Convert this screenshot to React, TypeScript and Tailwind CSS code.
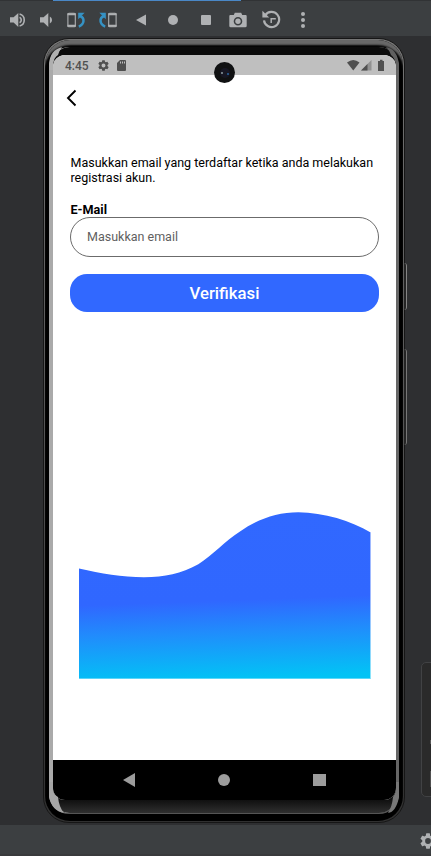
import React from "react";

function SoundIcon({ loud }: { loud?: boolean }) {
  return (
    <svg width="18" height="16" viewBox="0 0 18 16" fill="#afb1b3">
      <path d="M1 5.2h3.6L9.3 1v14L4.6 10.6H1z" />
      {loud ? (
        <g fill="none" stroke="#afb1b3" strokeWidth="1.6">
          <path d="M10.6 5.2a3.2 3.2 0 0 1 0 5.6" />
          <path d="M10.6 2a6.2 6.2 0 0 1 0 12" />
        </g>
      ) : (
        <path d="M10.8 4.4a4 4 0 0 1 0 7.2z" />
      )}
    </svg>
  );
}

function RotateIcon({ flip }: { flip?: boolean }) {
  return (
    <svg width="20" height="16" viewBox="0 0 20 16" className={flip ? "-ml-[2px] -scale-x-100" : ""}>
      <rect x="0.9" y="1.2" width="7.4" height="13.6" rx="1" fill="none" stroke="#afb1b3" strokeWidth="1.1" />
      <path d="M0.4 1.2h8.4v2H0.4zM0.4 12.8h8.4v2H0.4z" fill="#afb1b3" />
      <path d="M13 4c5 2 4.600 8.400-1.200 10.600" fill="none" stroke="#3592c4" strokeWidth="2.500" />
      <path d="M11.200 .8h6.400l-6.400 6.400z" fill="#3592c4" />
    </svg>
  );
}

function GearIcon({ size, color }: { size: number; color: string }) {
  return (
    <svg width={size} height={size} viewBox="2 2 20 20" fill={color} className="shrink-0">
      <path d="M19.14 12.94c.04-.3.06-.61.06-.94 0-.32-.02-.64-.07-.94l2.03-1.58a.49.49 0 0 0 .12-.61l-1.92-3.32a.49.49 0 0 0-.59-.22l-2.39.96c-.5-.38-1.03-.7-1.62-.94l-.36-2.54a.48.48 0 0 0-.48-.41h-3.84a.48.48 0 0 0-.47.41l-.36 2.54c-.59.24-1.13.57-1.62.94l-2.39-.96a.49.49 0 0 0-.59.22L2.74 8.87a.48.48 0 0 0 .12.61l2.03 1.58c-.05.3-.09.63-.09.94s.02.64.07.94l-2.03 1.58a.49.49 0 0 0-.12.61l1.92 3.32c.12.22.37.29.59.22l2.39-.96c.5.38 1.03.7 1.62.94l.36 2.54c.05.24.24.41.48.41h3.84c.24 0 .44-.17.47-.41l.36-2.54c.59-.24 1.13-.56 1.62-.94l2.39.96c.22.08.47 0 .59-.22l1.92-3.32a.48.48 0 0 0-.12-.61zM12 15.6A3.6 3.6 0 1 1 12 8.4a3.6 3.6 0 0 1 0 7.2z" />
    </svg>
  );
}

function Toolbar() {
  return (
    <header className="h-9 shrink-0 bg-[#3c3f41]">
      <div className="flex h-px bg-[#313335]">
        <div className="ml-[53px] w-[188px] bg-[#4a88c7]" />
      </div>
      <div className="flex h-[35px] items-center pt-[2px] pl-[9px]">
        <div className="flex w-[30px]"><SoundIcon loud /></div>
        <div className="flex w-[28px]"><SoundIcon /></div>
        <div className="flex w-[32px]"><RotateIcon /></div>
        <div className="flex w-[37px]"><RotateIcon flip /></div>
        <div className="flex w-[32px]">
          <svg width="10" height="12"><path d="M0 6 10 .5v11z" fill="#afb1b3" /></svg>
        </div>
        <div className="size-[10px] rounded-full bg-[#afb1b3]" />
        <div className="ml-[23px] size-[10px] rounded-[1px] bg-[#afb1b3]" />
        <svg width="18" height="16" viewBox="0 0 18 16" className="ml-[18px]">
          <path fillRule="evenodd" fill="#afb1b3" d="M5.8.8h6.4l1 2.2h3.3c.7 0 1.2.5 1.2 1.2v9.9c0 .7-.5 1.2-1.2 1.2h-15c-.7 0-1.2-.5-1.2-1.2V4.2C.3 3.500.8 3 1.500 3h3.300zM9 4.900a4.300 4.300 0 1 0 0 8.600 4.300 4.300 0 0 0 0-8.600z" />
          <circle cx="9" cy="9.200" r="2.700" fill="#afb1b3" />
        </svg>
        <svg width="19" height="19" viewBox="0 0 19 19" fill="none" stroke="#afb1b3" className="ml-[15px]">
          <path d="M3.200 5.300A7.600 7.600 0 1 1 2 10.400" strokeWidth="2.200" />
          <path d="M.4 .8v6.800h6.800z" fill="#afb1b3" stroke="none" />
          <path d="M9.200 13V8.700h4.600" strokeWidth="1.500" />
        </svg>
        <div className="ml-[20px] flex flex-col gap-[2px]">
          <i className="size-1 rounded-full bg-[#afb1b3]" />
          <i className="size-1 rounded-full bg-[#afb1b3]" />
          <i className="size-1 rounded-full bg-[#afb1b3]" />
        </div>
      </div>
    </header>
  );
}

function StatusBar() {
  return (
    <div className="flex h-5 shrink-0 items-center bg-[#bfbfbf] pl-[12px]">
      <span className="w-[33px] pt-px text-[12px] leading-none font-medium text-[#505050]">4:45</span>
      <GearIcon size={11} color="#505050" />
      <svg width="9" height="11" viewBox="0 0 9 11" className="ml-[8px]">
        <path fillRule="evenodd" fill="#505050" d="M3 0h5q1 0 1 1v9q0 1-1 1H1q-1 0-1-1V3zM3 1.500v2h1v-2zM5 1.500v2h1v-2zM7 1.500v2h1v-2z" />
      </svg>
      <svg width="39" height="13" viewBox="0 0 39 13" className="ml-auto mr-[10px]">
        <path d="M0 3.500Q6.200-1.500 12.500 3.500L6.250 11.500z" fill="#505050" />
        <path d="M24.500 1v10.500H14z" fill="#929292" />
        <path d="M20.500 5v6.500H14z" fill="#505050" />
        <path d="M33 .7h2.500V2H37v10h-6V2h2z" fill="#505050" />
      </svg>
    </div>
  );
}

function Wave() {
  return (
    <svg width="292" height="167" viewBox="0 0 292 167" className="ml-[26px] mt-[200px] shrink-0">
      <defs>
        <linearGradient id="sea" gradientUnits="userSpaceOnUse" x1="140" y1="0" x2="146" y2="167">
          <stop offset="0" stopColor="#3168ff" />
          <stop offset="0.53" stopColor="#3067ff" />
          <stop offset="0.72" stopColor="#208dfc" />
          <stop offset="1" stopColor="#02c3f5" />
        </linearGradient>
      </defs>
      <path
        d="M0 56.600C22 61.500 43 65.300 65 65.300C86 65.300 102 61.500 119.300 52.300C134 43 146 29 161 19.500C179 7 198 .2 219.300.2C245 .8 272 8.500 291.700 20.500V167H0z"
        fill="url(#sea)"
      />
      <path d="M0 166.500H291.500V20.500" fill="none" stroke="#fff" strokeOpacity=".35" />
    </svg>
  );
}

function AppScreen() {
  return (
    <div className="flex h-[745px] w-[343px] flex-col overflow-hidden rounded-[12px] bg-white">
      <StatusBar />
      <main className="flex h-[685px] flex-col">
        <svg width="12" height="18" viewBox="0 0 12 18" className="ml-[13px] mt-[14px] shrink-0">
          <path d="M9.500 1.500 2 9l7.500 7.500" fill="none" stroke="#000" strokeWidth="1.900" />
        </svg>
        <p className="ml-[17.500px] mt-[48px] h-[30px] text-[12.500px] leading-[15px] whitespace-nowrap text-black">
          Masukkan email yang terdaftar ketika anda melakukan
          <br />
          registrasi akun.
        </p>
        <label className="ml-[17.500px] mt-[17px] h-[15px] text-[12.600px] leading-[15px] font-bold text-black">E-Mail</label>
        <div className="ml-[17px] flex h-10 w-[309px] items-center rounded-full border border-[#6b6b6b] pl-[16px] text-[12.500px] text-[#5f5f5f]">
          Masukkan email
        </div>
        <button className="ml-[17px] mt-[17px] h-[38px] w-[309px] shrink-0 rounded-[17px] bg-[#3168ff] pt-[2px] text-[16.700px] leading-none font-medium text-white">
          Verifikasi
        </button>
        <Wave />
      </main>
      <nav className="flex h-10 shrink-0 items-center bg-black">
        <svg width="12" height="14" className="ml-[70px]"><path d="M0 7 12 0v14z" fill="#9c9c9c" /></svg>
        <div className="ml-[83px] size-3 rounded-full bg-[#9c9c9c]" />
        <div className="ml-[83px] h-3 w-[13px] bg-[#9c9c9c]" />
      </nav>
    </div>
  );
}

function Phone() {
  return (
    <div className="relative mt-[2px] ml-[43px] h-[785px] w-[362px] rounded-[26px] border border-[#161616] bg-linear-to-b from-[#747474] via-[#555] to-[#303030] p-px">
      <div className="h-full rounded-[25px] bg-black px-[4px] pt-[7px] pb-[7px] shadow-[inset_0_6px_2px_-1px_#686868]">
        <div className="flex h-full flex-col overflow-hidden rounded-[20px] border-b border-[#555] bg-linear-to-r from-[#aaa] from-50% to-[#666] to-50%">
          <div className="ml-[4px] mr-[3px] flex flex-1 flex-col rounded-[17px] bg-linear-to-b from-[#0b0b0b] from-98% to-[#303030] pt-[8px]">
            <AppScreen />
          </div>
        </div>
      </div>
      {/* light caught by the curved glass at each corner */}
      <svg width="18" height="24" className="absolute top-[7px] left-[5px]">
        <path d="M0 24V18Q1 4 13 1Q10 5 9 9Q5 11 4 19V24z" fill="#b0b0b0" />
      </svg>
      <svg width="18" height="24" className="absolute top-[7px] right-[5px]">
        <path d="M18 24V18Q16 3 5 1Q9 5 10 9Q14 12 15 19V24z" fill="#606060" />
      </svg>
      <svg width="18" height="32" className="absolute bottom-[8px] left-[5px]">
        <path d="M0 0H4V8Q5 13 9 15Q10 25 15 31Q3 29 0 15z" fill="#a5a5a5" />
      </svg>
      <svg width="18" height="32" className="absolute right-[5px] bottom-[8px]">
        <path d="M18 0H15V8Q14 13 12 15Q11 25 7 31Q15 30 18 15z" fill="#777" />
      </svg>
      <div className="absolute top-[23px] left-[170px] flex size-[21px] items-center justify-center rounded-full bg-[#101112]">
        <div className="flex size-[10px] items-center justify-between rounded-full bg-[#171724] px-px">
          <i className="size-[2px] rounded-full bg-[#8d9da0]" />
          <i className="mt-[3px] size-[2px] rounded-full bg-[#2866a0]" />
        </div>
      </div>
      <div className="absolute top-[224px] -right-[3px] h-[47px] w-[3px] rounded-r-sm border-r border-[#858585] bg-[#242424]" />
      <div className="absolute top-[310px] -right-[3px] h-[96px] w-[3px] rounded-r-sm border-r border-[#777] bg-[#242424]" />
    </div>
  );
}

export default function App() {
  return (
    <div className="relative flex h-[856px] w-[431px] flex-col overflow-hidden bg-[#2e2f31] font-[Roboto,sans-serif]">
      <Toolbar />
      <div className="h-[789px] shrink-0">
        <Phone />
      </div>
      <footer className="flex h-[31px] shrink-0 items-center border-b-2 border-[#393a3c] bg-[#3c3f41] pt-[2px] pl-[420px]">
        <GearIcon size={16} color="#afb1b3" />
      </footer>
      <div className="absolute top-[662px] left-[421px] h-[135px] w-[30px] rounded-[5px] border border-[#414244] bg-[#2a2a2a] pt-[77px] pl-[8px]">
        <div className="size-1 bg-[#555]" />
        <div className="mt-[27px] h-4 w-5 bg-[#505050]" />
      </div>
    </div>
  );
}
